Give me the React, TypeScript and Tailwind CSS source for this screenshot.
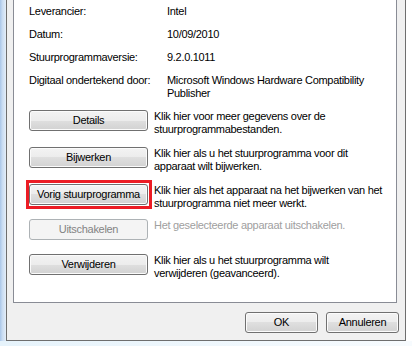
const btn =
  "flex items-center justify-center w-[119px] h-[21px] shrink-0 rounded-[3px] border border-[#707070] bg-[linear-gradient(to_bottom,#f3f3f3_0%,#ececec_50%,#dfdfdf_50%,#d2d2d2_100%)] shadow-[inset_0_0_0_1px_#fbfbfb] text-black whitespace-nowrap";
const btnDisabled =
  "flex items-center justify-center w-[119px] h-[21px] shrink-0 rounded-[3px] border border-[#adb2b5] bg-[#f4f4f4] text-[#838383] whitespace-nowrap";

function Row({
  label,
  children,
}: {
  label: string;
  children: React.ReactNode;
}) {
  return (
    <div className="flex">
      <div className="w-[138px] shrink-0">{label}</div>
      <div>{children}</div>
    </div>
  );
}

export default function App() {
  return (
    <div className="relative w-[412px] h-[346px] overflow-hidden bg-[#f3f9fd] font-['Liberation_Sans',Arial,sans-serif] text-[11px] tracking-[-0.3px] leading-[13px] text-black whitespace-nowrap">
      <div className="flex h-[341px]">
        <div className="w-[6px] h-full bg-[linear-gradient(to_right,#a9c6e8_0%,#c9dcf2_40%,#e4eef8_100%)]" />
        <div className="w-[400px] h-full flex flex-col border-x border-b border-[#6e6e6e] bg-[#f0f0f0]">
          <div className="ml-[6px] w-[384px] h-[303px] shrink-0 border-x border-b border-[#898c95] bg-white pl-[15px] pt-[5px]">
            <div className="flex flex-col gap-y-[10px]">
              <Row label="Leverancier:">Intel</Row>
              <Row label="Datum:">10/09/2010</Row>
              <Row label="Stuurprogrammaversie:">9.2.0.1011</Row>
              <Row label="Digitaal ondertekend door:">
                Microsoft Windows Hardware Compatibility
                <br />
                Publisher
              </Row>
            </div>

            <div className="flex flex-col">
              <div className="flex items-start mt-[10px]">
                <button className={btn}>Details</button>
                <div className="ml-[6px]">
                  Klik hier voor meer gegevens over de
                  <br />
                  stuurprogrammabestanden.
                </div>
              </div>
              <div className="flex items-start mt-[11px]">
                <button className={btn}>Bijwerken</button>
                <div className="ml-[6px]">
                  Klik hier als u het stuurprogramma voor dit
                  <br />
                  apparaat wilt bijwerken.
                </div>
              </div>
              <div className="flex items-start mt-[11px]">
                <div className="relative shrink-0">
                  <button className={btn}>Vorig stuurprogramma</button>
                  <div className="absolute -left-[3px] -top-[4px] -right-[4px] -bottom-[4px] border-[3px] border-[#ec1c24]" />
                </div>
                <div className="ml-[6px]">
                  Klik hier als het apparaat na het bijwerken van het
                  <br />
                  stuurprogramma niet meer werkt.
                </div>
              </div>
              <div className="flex items-start mt-[9px]">
                <button className={btnDisabled} disabled>
                  Uitschakelen
                </button>
                <div className="ml-[6px] text-[#a0a0a0]">
                  Het geselecteerde apparaat uitschakelen.
                </div>
              </div>
              <div className="flex items-start mt-[14px]">
                <button className={btn}>Verwijderen</button>
                <div className="ml-[6px]">
                  Klik hier als u het stuurprogramma wilt
                  <br />
                  verwijderen (geavanceerd).
                </div>
              </div>
            </div>
          </div>
          <div className="flex justify-end gap-[8px] pr-[6px] pt-[9px]">
            <button className={btn + " !w-[73px]"}>OK</button>
            <button className={btn + " !w-[73px]"}>Annuleren</button>
          </div>
        </div>
        <div className="w-[6px] h-full bg-white" />
      </div>
      <div className="h-[5px] bg-[linear-gradient(to_right,#e6f3fb,#f7fbfe)]" />
    </div>
  );
}
